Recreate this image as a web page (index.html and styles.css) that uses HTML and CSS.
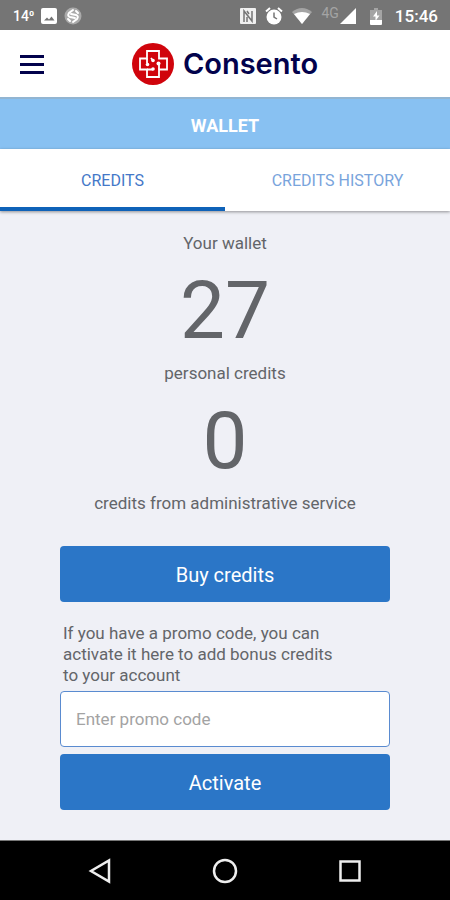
FILE: index.html
```html
<!DOCTYPE html>
<html lang="en">
<head>
  <meta charset="UTF-8"/>
  <meta name="viewport" content="width=device-width, initial-scale=1.0"/>
  <title>Wallet - Consento</title>
  <link rel="stylesheet" href="styles.css">
</head>
<body>
  <div class="status-bar">
    <div class="status-left">
      <span class="temp">14⁰</span>
      <svg width="16" height="16" viewBox="0 0 16 16">
        <rect width="16" height="16" rx="2" fill="#fff"/>
        <path d="M3 12.500l3-3 2 2 2.500-3 3 4z" fill="#757575"/>
      </svg>
      <svg width="18" height="18" viewBox="0 0 18 18">
        <circle cx="9" cy="9" r="8.500" fill="#aaa"/>
        <g fill="none" stroke="#fff" stroke-width="2" stroke-linecap="round">
          <path d="M9 3L5 6q-2 3 1 4l5 1"/>
          <path d="M9 15l4-3q2-3-1-4L7 7"/>
          <path d="M12 4l2 2M4 12l2 2"/>
        </g>
      </svg>
    </div>
    <div class="status-right">
      <svg width="16" height="16" viewBox="0 0 16 16">
        <rect width="16" height="16" rx="1" fill="#f0f0f0"/>
        <path d="M4 14V3l8 10V3M7 3l2 3M7 14V9" fill="none" stroke="#757575" stroke-width="1.500"/>
      </svg>
      <svg width="18" height="18" viewBox="0 0 18 18">
        <circle cx="9" cy="10" r="7.500" fill="#fff"/>
        <path d="M1 4.500L5 1M17 4.500L13 1" stroke="#fff" stroke-width="2"/>
        <path d="M9 5.500V10l3 2" fill="none" stroke="#757575" stroke-width="1.500"/>
      </svg>
      <svg width="20" height="16" viewBox="0 0 20 16">
        <path d="M0 4Q10-4 20 4L10 16z" fill="#a4a4a4"/>
        <path d="M2 6Q10 2 18 6L10 16z" fill="#fff"/>
      </svg>
      <div class="signal">
        <span>4G</span>
        <svg width="16" height="16" viewBox="0 0 16 16"><path d="M16 0v16H0z" fill="#fff"/></svg>
      </div>
      <svg class="battery" width="12" height="17" viewBox="0 0 12 17">
        <path d="M4 0h4v2h4v10H0V2h4z" fill="#a4a4a4"/>
        <path d="M0 12h12v4q0 1-1 1H1q-1 0-1-1z" fill="#fff"/>
        <path d="M7 3L3 8.500h2.500V13L9.500 7.500H7z" fill="#fff"/>
      </svg>
      <span class="clock">15:46</span>
    </div>
  </div>

  <header class="header">
    <button type="button" class="menu-btn" aria-label="Menu"><span></span><span></span><span></span></button>
    <div class="logo">
      <svg width="42" height="42" viewBox="0 0 42 42">
        <circle cx="21" cy="21" r="21" fill="#d0040c"/>
        <g fill="none" stroke="#fff" stroke-width="1.800">
          <path d="M15 15.500V8h12v7.500h8v11h-8V34H15v-7.500H8v-11z"/>
          <path d="M15 15.500V20M27 26.500V21M21 17.500l-2-2.500M21 26.500h-6"/>
        </g>
        <g fill="#fff">
          <circle cx="21" cy="17.500" r="1.800"/>
          <circle cx="15.500" cy="21.500" r="1.800"/>
          <circle cx="26.500" cy="20.500" r="2"/>
          <circle cx="21" cy="26" r="1.800"/>
        </g>
      </svg>
      <span>Consento</span>
    </div>
  </header>

  <h1 class="title">WALLET</h1>

  <nav class="tabs">
    <a href="#credits" class="active">CREDITS</a>
    <a href="#history">CREDITS HISTORY</a>
  </nav>

  <main class="wallet" id="credits">
    <p>Your wallet</p>
    <div class="amount">27</div>
    <p>personal credits</p>
    <div class="amount">0</div>
    <p>credits from administrative service</p>

    <button type="button" class="btn buy-btn">Buy credits</button>

    <form class="promo" autocomplete="off">
      <label for="promoCode">If you have a promo code, you can activate it here to add bonus credits to your account</label>
      <input type="text" id="promoCode" name="promo" placeholder="Enter promo code">
      <button type="button" class="btn">Activate</button>
    </form>
  </main>

  <!-- System navigation -->
  <div class="nav-bar">
    <button type="button" aria-label="Back">
      <svg width="26" height="26" viewBox="0 0 26 26"><path d="M22 2.500v21L4 13z"/></svg>
    </button>
    <button type="button" aria-label="Home">
      <svg width="26" height="26" viewBox="0 0 26 26"><circle cx="13" cy="13" r="11"/></svg>
    </button>
    <button type="button" aria-label="Recent apps">
      <svg width="26" height="26" viewBox="0 0 26 26"><rect x="3.500" y="3.500" width="19" height="19"/></svg>
    </button>
  </div>
</body>
</html>
```
FILE: styles.css
```css
* { box-sizing:border-box; }
body { background:#eff0f6; color:#636569; font-family:Roboto, sans-serif; font-size:17px; margin:0; min-height:100vh; display:flex; flex-direction:column; }
button, input { font-family:inherit; }
svg { display:block; }

.status-bar {
  display: flex;
  justify-content: space-between;
  align-items: center;
  height: 30px;
  padding: 2px 12px 0 13px;
  background: #757575;
  color: #fff;
}
.status-left { display:flex; align-items:center; gap:7px; }
.temp { font-size:14px; font-weight:500; }
.status-right { display:flex; align-items:center; gap:9px; }
.signal { display:flex; align-items:center; gap:1px; }
.signal span { color:#a4a4a4; font-size:14px; line-height:14px; padding-bottom:6px; }
.battery { margin:0 4px 0 5px; }
.clock { font-size:17px; font-weight:500; }

.header {
  display: grid;
  grid-template-columns: 1fr auto 1fr;
  align-items: center;
  height: 67px;
  padding: 0 20px;
  background: #fff;
}
.menu-btn { display:flex; flex-direction:column; gap:5px; width:24px; padding:2px 0 0; border:none; background:none; cursor:pointer; }
.menu-btn span { height:3px; background:#02024c; }
.logo { display:flex; align-items:center; gap:9px; color:#02024c; font-family:Inter, sans-serif; font-size:29px; font-weight:600; line-height:40px; }

.title { margin:0; padding:18px 0 14px; background:#88c1f2; border-top:2px solid #92b5d2; color:#fff; font-size:18px; line-height:18px; font-weight:bold; text-align:center; }

.tabs { display:flex; background:#fff; box-shadow:0 1px 3px rgba(0,0,0,0.4); }
.tabs a { flex:1; padding:22px 0 16px; border-bottom:4px solid transparent; color:#79a4dc; font-size:16px; line-height:20px; text-align:center; text-decoration:none; }
.tabs a.active { color:#4478c8; border-bottom-color:#0f62b8; }

.wallet { flex:1; padding:22px 60px 30px; text-align:center; }
.wallet p { margin:0 -40px; line-height:20px; }
.amount { padding-top:6px; font-size:80px; line-height:104px; }
.btn { display:block; width:100%; height:56px; padding:2px 0 0; border:none; border-radius:4px; background:#2b76c7; color:#fff; font-size:20px; cursor:pointer; }
.btn:hover { background:#2468b2; }
.buy-btn { margin-top:33px; }
.promo { margin-top:21px; text-align:left; }
.promo label { display:block; padding:0 40px 0 3px; line-height:21px; }
.promo input { display:block; width:100%; height:56px; margin:5px 0 7px; padding:0 15px; border:1px solid #5a8bd0; border-radius:4px; background:#fff; color:#636569; font-size:17px; }
.promo input::placeholder { color:#a3a3a3; opacity:1; }

.nav-bar { display:flex; justify-content:space-between; align-items:center; height:60px; padding:0 87px; background:#000; border-top:1px solid #777; }
.nav-bar button { padding:0; border:none; background:none; cursor:pointer; }
.nav-bar svg { fill:none; stroke:#eee; stroke-width:2.5; }
```
